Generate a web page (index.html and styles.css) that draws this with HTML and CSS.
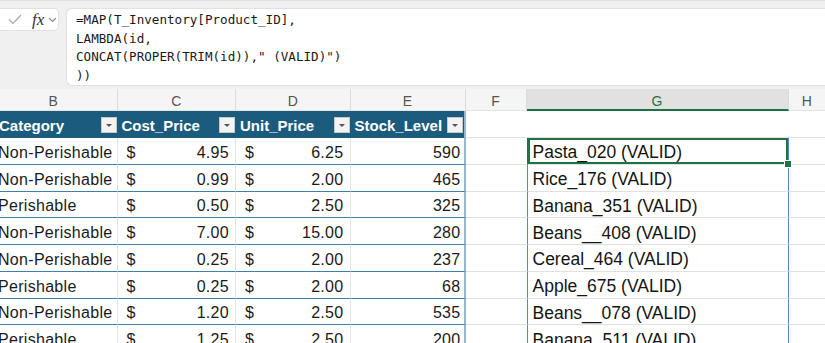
FILE: index.html
```html
<!DOCTYPE html>
<html>
<head>
<meta charset="utf-8">
<link rel="stylesheet" href="styles.css">
</head>
<body>
<div class="app">
  <div class="formula-area">
    <div class="tools">
      <svg class="check" width="14" height="11" viewBox="0 0 14 11"><path d="M1 5.5 L5 9.5 L13 1" fill="none" stroke="#a6a6a6" stroke-width="1.2"/></svg>
      <span class="fx">fx</span>
      <svg class="chev" width="9" height="6" viewBox="0 0 9 6"><path d="M1 1 L4.5 4.5 L8 1" fill="none" stroke="#8a8a8a" stroke-width="1.1"/></svg>
    </div>
    <div class="formula-box">=MAP(T_Inventory[Product_ID],<br>LAMBDA(id,<br>CONCAT(PROPER(TRIM(id)),"&nbsp;(VALID)")<br>))</div>
  </div>
  <div class="sheet">
    <div class="ch">B</div><div class="ch">C</div><div class="ch">D</div><div class="ch">E</div><div class="ch">F</div><div class="ch ch-sel">G</div><div class="ch ch-last">H</div>

    <div class="th th-first">Category<span class="filter"></span></div>
    <div class="th">Cost_Price<span class="filter"></span></div>
    <div class="th">Unit_Price<span class="filter"></span></div>
    <div class="th th-last">Stock_Level<span class="filter"></span></div>
    <div class="gc"></div><div class="gc"></div><div class="gc"></div>

    <div class="td">Non-Perishable</div><div class="td money"><span>$</span><span>4.95</span></div><div class="td money"><span>$</span><span>6.25</span></div><div class="td num">590</div><div class="gc"></div><div class="gc gs active">Pasta_020 (VALID)</div><div class="gc"></div>

    <div class="td">Non-Perishable</div><div class="td money"><span>$</span><span>0.99</span></div><div class="td money"><span>$</span><span>2.00</span></div><div class="td num">465</div><div class="gc"></div><div class="gc gs">Rice_176 (VALID)</div><div class="gc"></div>

    <div class="td">Perishable</div><div class="td money"><span>$</span><span>0.50</span></div><div class="td money"><span>$</span><span>2.50</span></div><div class="td num">325</div><div class="gc"></div><div class="gc gs">Banana_351 (VALID)</div><div class="gc"></div>

    <div class="td">Non-Perishable</div><div class="td money"><span>$</span><span>7.00</span></div><div class="td money"><span>$</span><span>15.00</span></div><div class="td num">280</div><div class="gc"></div><div class="gc gs">Beans__408 (VALID)</div><div class="gc"></div>

    <div class="td">Non-Perishable</div><div class="td money"><span>$</span><span>0.25</span></div><div class="td money"><span>$</span><span>2.00</span></div><div class="td num">237</div><div class="gc"></div><div class="gc gs">Cereal_464 (VALID)</div><div class="gc"></div>

    <div class="td">Perishable</div><div class="td money"><span>$</span><span>0.25</span></div><div class="td money"><span>$</span><span>2.00</span></div><div class="td num">68</div><div class="gc"></div><div class="gc gs">Apple_675 (VALID)</div><div class="gc"></div>

    <div class="td">Non-Perishable</div><div class="td money"><span>$</span><span>1.20</span></div><div class="td money"><span>$</span><span>2.50</span></div><div class="td num">535</div><div class="gc"></div><div class="gc gs">Beans__078 (VALID)</div><div class="gc"></div>

    <div class="td">Perishable</div><div class="td money"><span>$</span><span>1.25</span></div><div class="td money"><span>$</span><span>2.50</span></div><div class="td num">200</div><div class="gc"></div><div class="gc gs">Banana_511 (VALID)</div><div class="gc"></div>
  </div>
</div>
</body>
</html>
```

FILE: styles.css
```css
* { box-sizing: border-box; }
html, body { margin: 0; padding: 0; background: #fff; }
.app {
  width: 825px;
  height: 343px;
  overflow: hidden;
  font-family: "Liberation Sans", Arial, sans-serif;
}
.formula-area {
  height: 89px;
  background: #f0f0f0;
  display: flex;
  align-items: flex-start;
  padding-top: 7px;
  gap: 7px;
  border-top: 1px solid #e2e2e2;
}
.tools {
  width: 63px;
  height: 23px;
  margin-left: -4px;
  background: #fff;
  border: 1px solid #e0e0e0;
  border-radius: 5px;
  display: flex;
  align-items: center;
  padding-left: 11px;
}
.check { margin-right: 10px; }
.fx {
  font-family: "Liberation Serif", "Times New Roman", serif;
  font-style: italic;
  font-size: 17px;
  color: #333;
  margin-right: 4px;
  line-height: 1;
}
.chev { margin-top: 1px; }
.formula-box {
  flex: 1;
  height: 78px;
  background: #fff;
  border: 1px solid #e0e0e0;
  border-right: none;
  border-radius: 6px 0 0 6px;
  padding: 2px 0 0 9px;
  font-family: "DejaVu Sans Mono", "Liberation Mono", monospace;
  font-size: 12.6px;
  line-height: 18.5px;
  color: #1a1a1a;
  white-space: nowrap;
}
.sheet {
  margin-left: -10px;
  display: grid;
  grid-template-columns: 127.5px 118.5px 114.5px 115px 61px 262px 1fr;
  grid-template-rows: 22px 27px;
  grid-auto-rows: 26.75px;
  width: 835px;
}
.ch {
  background: #f5f5f5;
  border-right: 1px solid #dcdcdc;
  border-bottom: 1px solid #e4e4e4;
  color: #555;
  font-size: 14px;
  display: flex;
  align-items: center;
  justify-content: center;
  padding-top: 3px;
}
.ch-sel {
  background: #e1e1e1;
  color: #1e7145;
  border-bottom: 2px solid #1e7145;
}
.ch-last { border-right: none; }
.th {
  background: #1b5b7e;
  color: #fff;
  font-weight: bold;
  font-size: 15px;
  display: flex;
  align-items: center;
  padding: 2px 1px 0 4px;
}
.th-first { padding-left: 9px; }
.filter {
  margin-left: auto;
  width: 16px;
  height: 16px;
  margin-top: -2px;
  background: #f3f3f3;
  border: 1px solid #c8c8c8;
  position: relative;
}
.filter::after {
  content: "";
  position: absolute;
  left: 4px;
  top: 6px;
  border-left: 3px solid transparent;
  border-right: 3px solid transparent;
  border-top: 3px solid #555;
}
.th-last { border-right: 2px solid #9ab6cc; }
.td {
  border-bottom: 1px solid #3f80a6;
  border-right: 1px solid #e4e4e4;
  font-size: 16px;
  letter-spacing: 0.3px;
  color: #1a1a1a;
  display: flex;
  align-items: center;
  padding: 4px 6px 0 8px;
  white-space: nowrap;
}
.money { justify-content: space-between; padding-left: 9px; }
.num { justify-content: flex-end; padding-right: 3px; border-right: 2px solid #9ab6cc; }
.gc {
  border-bottom: 1px solid #e1e1e1;
  font-size: 17.5px;
  color: #141414;
  display: flex;
  align-items: center;
  padding: 4px 0 0 5px;
  white-space: nowrap;
}
.gs {
  border-left: 1px solid #5b82d6;
  border-right: 1px solid #5b82d6;
}
.active {
  position: relative;
  box-shadow: inset 0 0 0 2px #1f7244;
  border-left-color: #1f7244;
}
.active::after {
  content: "";
  position: absolute;
  right: -4px;
  bottom: -4px;
  width: 6px;
  height: 6px;
  background: #1f7244;
  border: 1px solid #fff;
  z-index: 2;
}
```
